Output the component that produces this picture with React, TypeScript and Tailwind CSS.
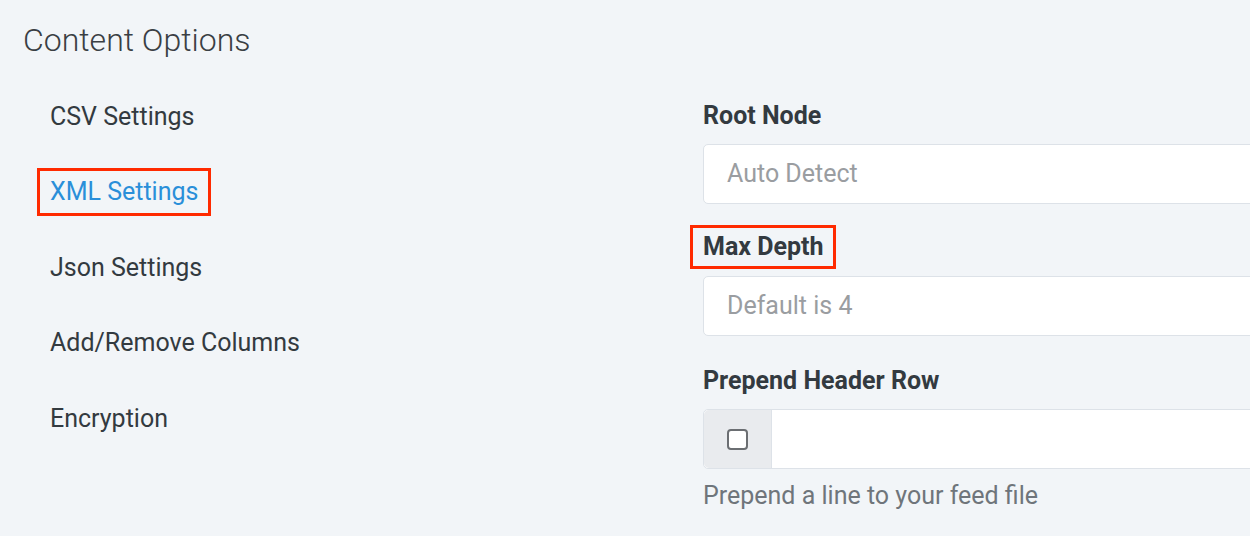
export default function App() {
  const items = ["CSV Settings", "XML Settings", "Json Settings", "Add/Remove Columns", "Encryption"];

  return (
    <div className="h-[536px] w-[1250px] overflow-hidden bg-[#f2f5f8] font-['Roboto',sans-serif] text-[#333a40]">
      <h1 className="pl-[23px] pt-[20px] text-[32px] font-light leading-[40px] text-[#3a3f44]">Content Options</h1>

      <div className="flex pt-[19px]">
        <ul className="w-[703px] shrink-0 pl-[50px]">
          {items.map((item) => (
            <li key={item} className="flex h-[75.5px] items-center text-[25px]">
              {item === "XML Settings" ? (
                <span className="-ml-[13px] border-[3px] border-[#ff2a00] px-[10px] py-[4px] leading-[34px] text-[#2a8fd9]">
                  {item}
                </span>
              ) : (
                <span className="leading-[34px]">{item}</span>
              )}
            </li>
          ))}
        </ul>

        <div className="w-[700px] shrink-0 pt-[20px]">
          <label className="block text-[25px] font-bold leading-[34px]">Root Node</label>
          <div className="mt-[11px] flex h-[60px] items-center rounded-[5px] border border-[#dde2e8] bg-white px-[23px] text-[25px] text-[#9a9da1]">
            Auto Detect
          </div>

          <div className="mt-[21px]">
            <span className="-ml-[13px] inline-block border-[3px] border-[#ff2a00] px-[10px] py-[2px] text-[25px] font-bold leading-[34px]">
              Max Depth
            </span>
          </div>
          <div className="mt-[7px] flex h-[60px] items-center rounded-[5px] border border-[#dde2e8] bg-white px-[23px] text-[25px] text-[#9a9da1]">
            Default is 4
          </div>

          <label className="mt-[28px] block text-[25px] font-bold leading-[34px]">Prepend Header Row</label>
          <div className="mt-[11px] flex h-[60px] rounded-[5px] border border-[#dde2e8] bg-white">
            <div className="flex w-[68px] items-center justify-center rounded-l-[5px] border-r border-[#dde2e8] bg-[#e9ebee]">
              <span className="h-[21px] w-[21px] rounded-[4px] border-2 border-[#6b6e72] bg-white" />
            </div>
          </div>
          <p className="mt-[10px] text-[25px] leading-[34px] text-[#6f757b]">Prepend a line to your feed file</p>
        </div>
      </div>
    </div>
  );
}
